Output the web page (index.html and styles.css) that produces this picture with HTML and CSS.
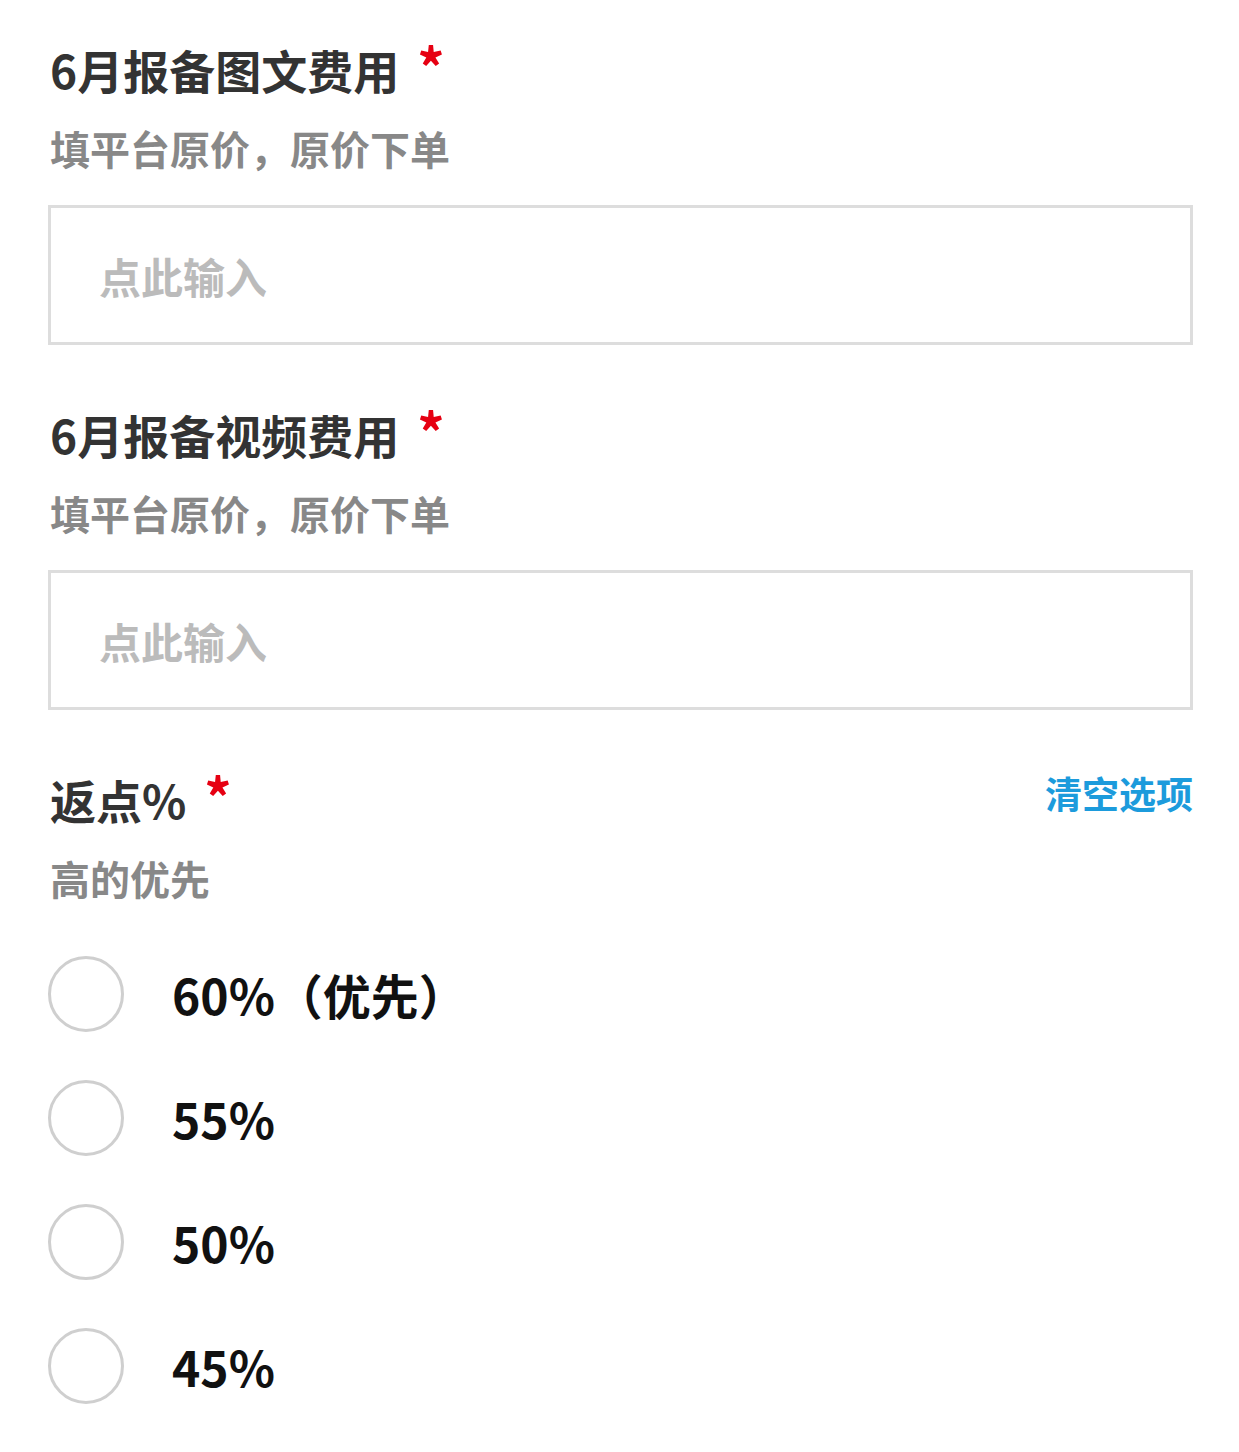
FILE: index.html
```html
<!DOCTYPE html>
<html lang="zh-CN">
<head>
    <meta charset="UTF-8">
    <meta name="viewport" content="width=device-width, initial-scale=1.0">
    <title>报备</title>
    <link rel="stylesheet" href="styles.css">
</head>
<body>
    <div class="form">
        <div class="field">
            <div class="label-row">
                <div class="title">6月报备图文费用<span class="req">*</span></div>
            </div>
            <p class="hint">填平台原价，原价下单</p>
            <div class="input-box">
                <input type="text" placeholder="点此输入">
            </div>
        </div>

        <div class="field">
            <div class="label-row">
                <div class="title">6月报备视频费用<span class="req">*</span></div>
            </div>
            <p class="hint">填平台原价，原价下单</p>
            <div class="input-box">
                <input type="text" placeholder="点此输入">
            </div>
        </div>

        <div class="field">
            <div class="label-row">
                <div class="title">返点%<span class="req">*</span></div>
                <a class="clear">清空选项</a>
            </div>
            <p class="hint">高的优先</p>
            <div class="options">
                <label class="option"><span class="radio"></span><span class="option-text">60%（优先）</span></label>
                <label class="option"><span class="radio"></span><span class="option-text">55%</span></label>
                <label class="option"><span class="radio"></span><span class="option-text">50%</span></label>
                <label class="option"><span class="radio"></span><span class="option-text">45%</span></label>
            </div>
        </div>
    </div>
</body>
</html>
```

FILE: styles.css
```css
body {
    margin: 0;
    background: #fff;
    font-family: 'Noto Sans CJK SC', 'Noto Sans', sans-serif;
    color: #333;
}

.form {
    padding: 39px 46px 0 48px;
}

.field {
    margin-bottom: 59px;
}

.label-row {
    display: flex;
    justify-content: space-between;
    align-items: center;
    height: 60px;
}

.title {
    font-size: 46px;
    font-weight: 700;
    line-height: 60px;
    color: #333;
    padding-left: 2px;
}

.req {
    color: #e60012;
    font-size: 54px;
    font-weight: 700;
    margin-left: 18px;
    line-height: 0;
    vertical-align: 0;
}

.clear {
    font-size: 37px;
    font-weight: 700;
    color: #1c9bdc;
    cursor: pointer;
    margin-bottom: 12px;
}

.hint {
    margin: 21px 0 0 2px;
    font-size: 40px;
    font-weight: 700;
    line-height: 56px;
    color: #888;
}

.input-box {
    margin-top: 29px;
    height: 134px;
    border: 3px solid #ddd;
    display: flex;
    align-items: center;
}

.input-box input {
    border: none;
    outline: none;
    width: 100%;
    padding: 0 0 0 48px;
    font-family: inherit;
    font-size: 42px;
    font-weight: 700;
    background: transparent;
}

.input-box input::placeholder {
    color: #bbb;
}

.options {
    margin-top: 26px;
}

.option {
    display: flex;
    align-items: center;
    height: 124px;
}

.radio {
    width: 70px;
    height: 70px;
    border: 3px solid #cfcfcf;
    border-radius: 50%;
    flex-shrink: 0;
}

.option-text {
    margin-left: 48px;
    font-size: 48px;
    font-weight: 700;
    color: #111;
}
```
